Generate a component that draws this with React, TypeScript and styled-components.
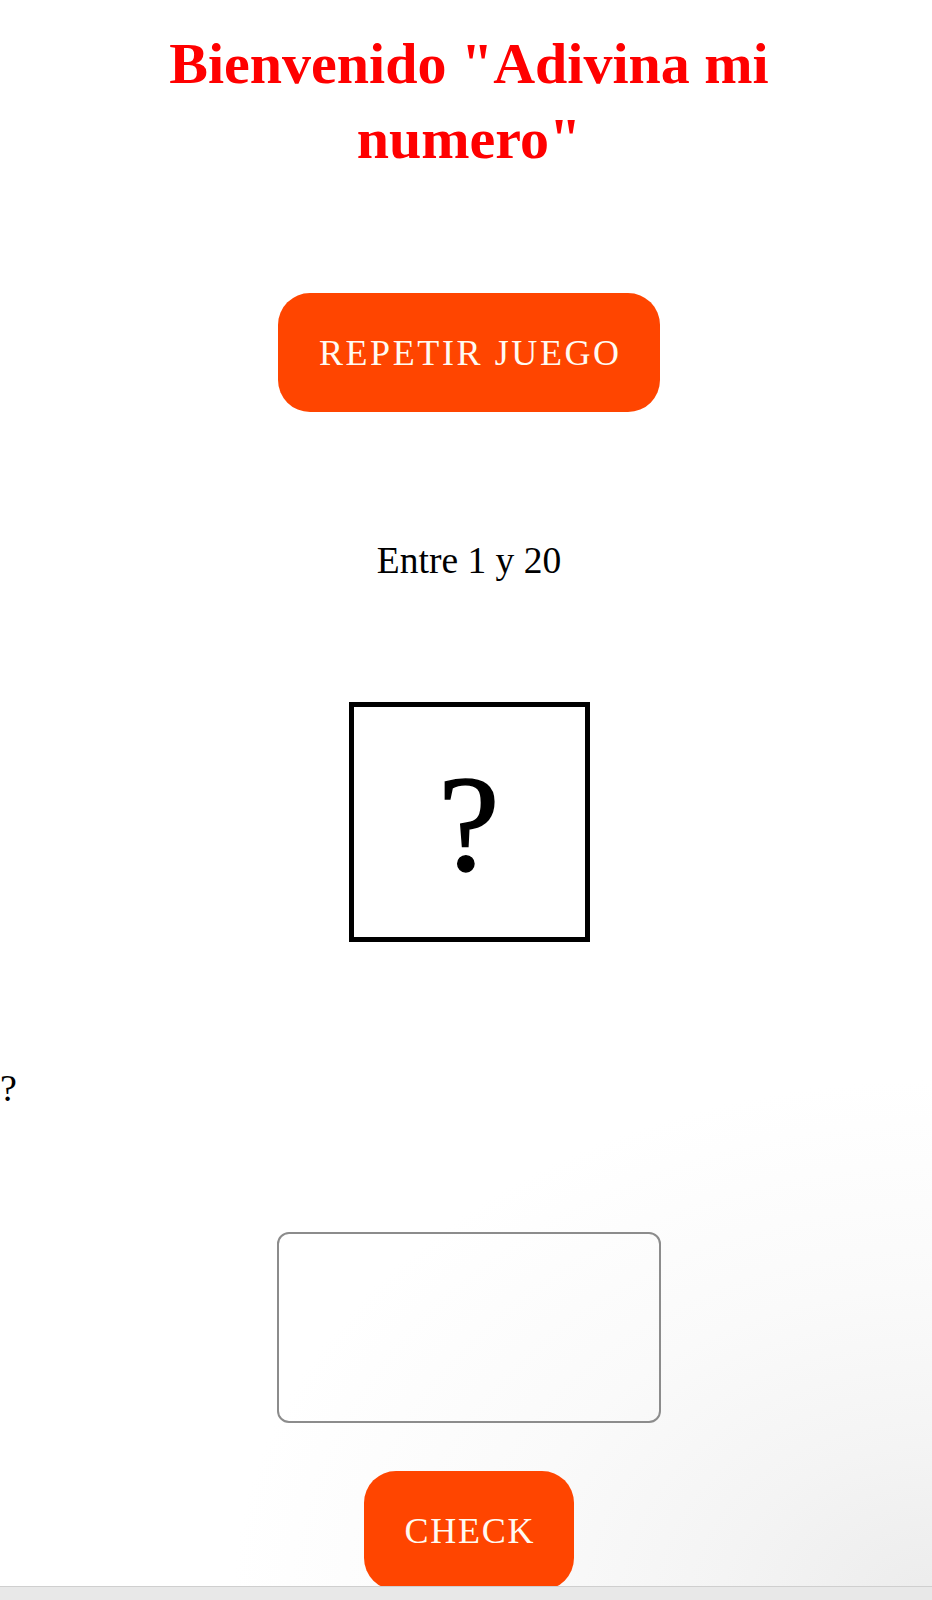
import React from "react";
import styled, { createGlobalStyle } from "styled-components";

const GlobalStyle = createGlobalStyle`
  html, body {
    margin: 0;
    padding: 0;
  }
  body {
    min-height: 100vh;
    background:
      radial-gradient(ellipse 700px 520px at 100% 100%, #ececec 0%, #f4f4f4 30%, #fafafa 60%, rgba(255,255,255,0) 100%),
      #ffffff;
    font-family: "Liberation Serif", "Times New Roman", serif;
    color: #000;
  }
`;

const Page = styled.main`
  display: flex;
  flex-direction: column;
  min-height: 100vh;
`;

const Column = styled.section`
  display: flex;
  flex-direction: column;
  align-items: center;
  padding-left: 6px;
`;

const Title = styled.h1`
  margin: 26px 0 0;
  max-width: 640px;
  font-size: 58px;
  line-height: 75px;
  font-weight: 700;
  color: #ff0000;
  text-align: center;
`;

const ActionButton = styled.button<{ $width: number; $top: number; $size: number; $spacing: number }>`
  margin-top: ${(p) => p.$top}px;
  width: ${(p) => p.$width}px;
  height: 119px;
  border: none;
  border-radius: 32px;
  background: #ff4500;
  color: #fffaf2;
  font-family: "Liberation Serif", "Times New Roman", serif;
  font-size: ${(p) => p.$size}px;
  letter-spacing: ${(p) => p.$spacing}px;
  text-indent: ${(p) => p.$spacing}px;
  padding: 0;
  cursor: pointer;
`;

const Range = styled.p`
  margin: 128px 0 0;
  font-size: 37.5px;
  line-height: 42px;
`;

const SecretBox = styled.div`
  margin-top: 120px;
  box-sizing: border-box;
  width: 241px;
  height: 240px;
  border: 5px solid #000;
  display: flex;
  align-items: center;
  justify-content: center;
  font-size: 138px;
  line-height: 1;
  padding-top: 4px;
  -webkit-text-stroke: 1.5px #000;
`;

const Hint = styled.p`
  margin: 125px 0 0;
  font-size: 38px;
  line-height: 42px;
  text-align: left;
`;

const GuessInput = styled.input`
  margin-top: 123px;
  box-sizing: border-box;
  width: 384px;
  height: 191px;
  border: 2px solid #8c8c8c;
  border-radius: 12px;
  background: transparent;
  font-family: "Liberation Serif", "Times New Roman", serif;
  font-size: 60px;
  text-align: center;
  outline: none;
`;

const BottomBar = styled.div`
  position: fixed;
  left: 0;
  right: 0;
  bottom: 0;
  height: 13px;
  background: #e8e8e8;
  border-top: 1px solid #cfcfcf;
`;

export default function App() {
  return (
    <>
      <GlobalStyle />
      <Page>
        <Column>
          <Title>Bienvenido "Adivina mi numero"</Title>
          <ActionButton $width={382} $top={117} $size={36} $spacing={2.6}>
            REPETIR JUEGO
          </ActionButton>
          <Range>Entre 1 y 20</Range>
          <SecretBox>?</SecretBox>
        </Column>
        <Hint>?</Hint>
        <Column>
          <GuessInput type="number" aria-label="Tu número" />
          <ActionButton $width={210} $top={48} $size={36} $spacing={1.8}>
            CHECK
          </ActionButton>
        </Column>
      </Page>
      <BottomBar />
    </>
  );
}
